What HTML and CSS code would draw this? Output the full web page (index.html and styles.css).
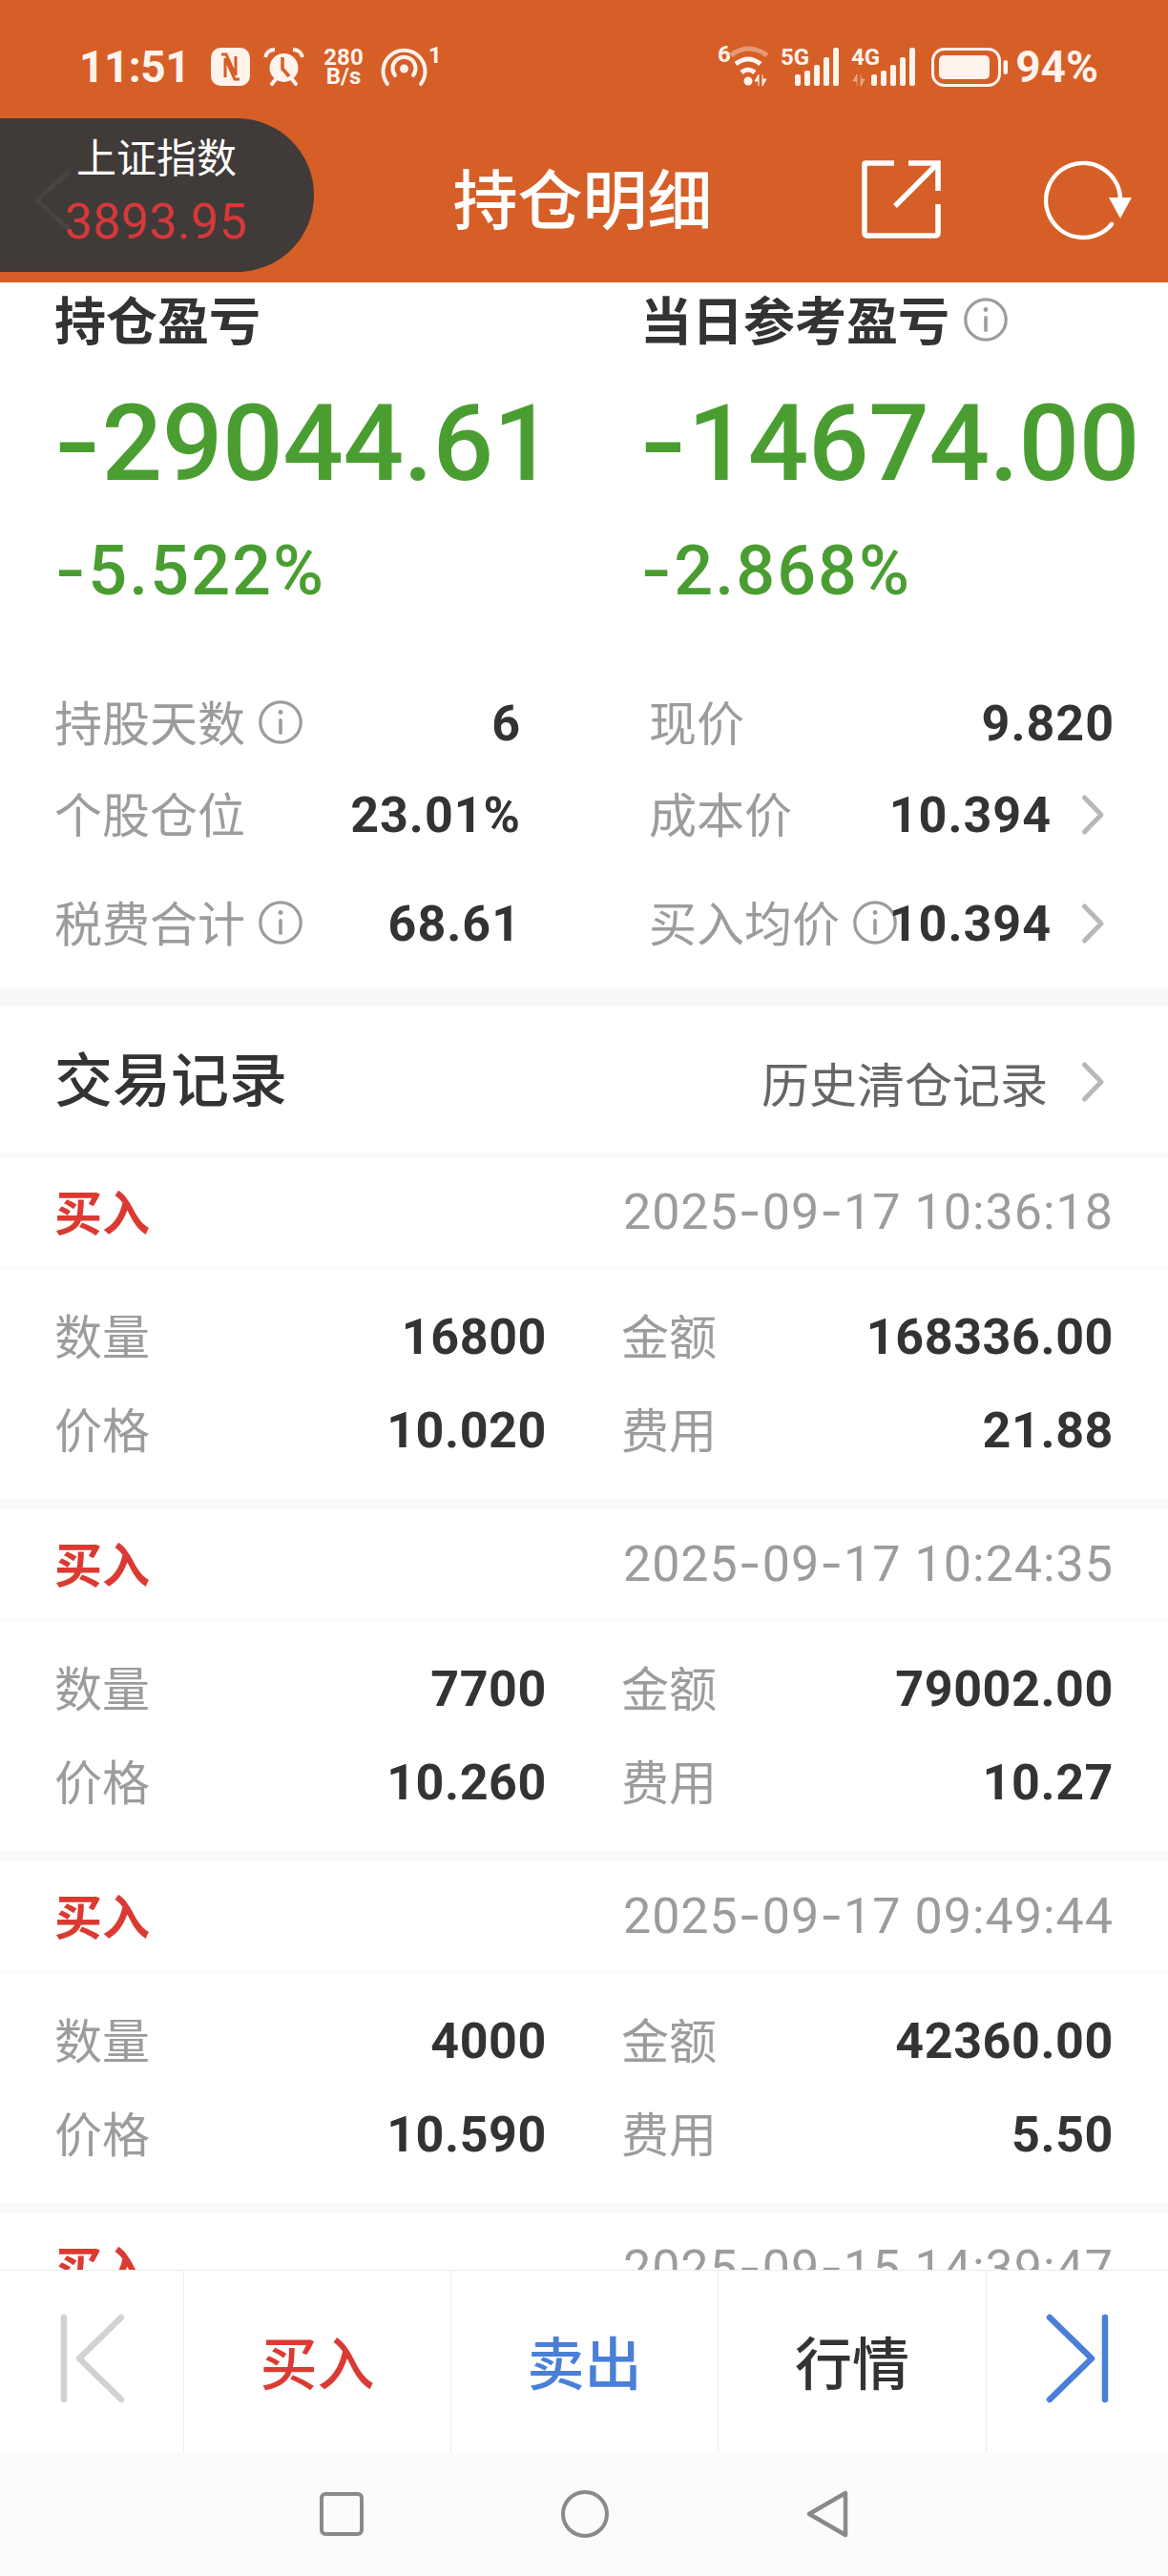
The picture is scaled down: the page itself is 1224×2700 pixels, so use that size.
FILE: index.html
```html
<!DOCTYPE html>
<html lang="zh-CN">
<head>
    <meta charset="UTF-8">
    <meta name="viewport" content="width=device-width, initial-scale=1.0">
    <title>持仓明细</title>
    <link rel="stylesheet" href="styles.css">
</head>
<body>
<div class="phone">
    <header class="app-header">
        <div class="status-bar">
            <div class="status-group">
                <span class="status-time">11:51</span>
                <svg class="ic-nfc" width="41" height="40" viewBox="0 0 41 40">
                    <rect x="1.5" y="1.5" width="38" height="37" rx="9" fill="#fff3ec" stroke="#fff3ec" stroke-width="3"/>
                    <path d="M11 7h5l10 22V9M30 33h-5L15 11v20" fill="none" stroke="#d65e27" stroke-width="3"/>
                </svg>
                <svg class="ic-alarm" width="41" height="40" viewBox="0 0 41 40">
                    <circle cx="20.5" cy="21" r="15" fill="#fff3ec"/>
                    <path d="M1 10Q3 2 11 2M40 10Q38 2 30 2" fill="none" stroke="#fff3ec" stroke-width="4"/>
                    <path d="M8 38l4-5M33 38l-4-5" stroke="#fff3ec" stroke-width="4" stroke-linecap="round"/>
                    <path d="M19 10v12l7 8" fill="none" stroke="#d65e27" stroke-width="3.5"/>
                </svg>
                <span class="net-speed"><b>280</b><b>B/s</b></span>
                <svg class="ic-hotspot" width="60" height="44" viewBox="0 0 60 44">
                    <g fill="none" stroke="#fff3ec" stroke-linecap="round">
                        <path d="M7 40A22 22 0 1 1 42 40" stroke-width="4"/>
                        <path d="M15 31A12 12 0 1 1 34 31" stroke-width="4"/>
                    </g>
                    <circle cx="24.5" cy="24" r="4.5" fill="#fff3ec"/>
                    <text x="50" y="18" class="svg-label">1</text>
                </svg>
            </div>
            <div class="status-group status-right">
                <svg width="54" height="44" viewBox="0 0 54 44">
                    <text x="0" y="17" class="svg-label">6</text>
                    <g fill="none" stroke="#fff3ec" stroke-width="5">
                        <path d="M14 10Q32 -4 52 10" stroke-opacity=".4"/>
                        <path d="M19 19Q32 9 45 19"/>
                        <path d="M25 28Q32 22 39 28"/>
                    </g>
                    <circle cx="32" cy="37" r="4.5" fill="#fff3ec"/>
                    <path d="M43 42V30l-4 7h4M47 30v12l4-7h-4" fill="#fff3ec" stroke="#fff3ec" stroke-width="1"/>
                </svg>
                <svg width="62" height="44" viewBox="0 0 62 44">
                    <text x="0" y="20" class="svg-label">5G</text>
                    <g fill="#fff3ec">
                        <rect x="15" y="30" width="6" height="12" rx="2"/>
                        <rect x="25" y="26" width="6" height="16" rx="2"/>
                        <rect x="35" y="20" width="6" height="22" rx="2"/>
                        <rect x="45" y="12" width="6" height="30" rx="2"/>
                        <rect x="55" y="2" width="6" height="40" rx="2"/>
                    </g>
                </svg>
                <svg width="67" height="44" viewBox="0 0 67 44">
                    <text x="0" y="20" class="svg-label">4G</text>
                    <path d="M6 42V30l-4 7h4M10 30v12l4-7h-4" fill="#fff3ec" fill-opacity=".4" stroke="#fff3ec" stroke-opacity=".4"/>
                    <g fill="#fff3ec">
                        <rect x="21" y="30" width="6" height="12" rx="2"/>
                        <rect x="31" y="26" width="6" height="16" rx="2"/>
                        <rect x="41" y="20" width="6" height="22" rx="2"/>
                        <rect x="51" y="12" width="6" height="30" rx="2"/>
                        <rect x="61" y="2" width="6" height="40" rx="2"/>
                    </g>
                </svg>
                <svg class="ic-battery" width="80" height="41" viewBox="0 0 80 41">
                    <rect x="1.5" y="1.5" width="70" height="38" rx="12" fill="none" stroke="#fff3ec" stroke-width="3"/>
                    <rect x="8" y="8" width="53" height="25" rx="5" fill="#fff3ec"/>
                    <rect x="75.5" y="13" width="4.5" height="15" rx="2" fill="#fff3ec"/>
                </svg>
                <span class="status-battery">94%</span>
            </div>
        </div>
        <div class="title-bar">
            <h1 class="page-title">持仓明细</h1>
            <div class="title-actions">
                <svg width="80" height="82" viewBox="0 0 80 82" fill="none" stroke="#fff" stroke-width="5.5">
                    <path d="M33 3H3a1 1 0 0 0-1 1v73a2 2 0 0 0 2 2h73a2 2 0 0 0 2-2V46"/>
                    <path d="M34 48L78 4M48 3h31v29"/>
                </svg>
                <svg class="ic-refresh" width="92" height="84" viewBox="0 0 92 84">
                    <path d="M78 38A39 39 0 1 0 69 66" fill="none" stroke="#fff" stroke-width="4.5" stroke-linecap="round"/>
                    <path d="M66 38H90L78 60Z" fill="#fff"/>
                </svg>
            </div>
        </div>
        <div class="index-pill">
            <svg class="pill-back" width="40" height="66" viewBox="0 0 40 66">
                <path d="M37 3L4 33l33 30" fill="none" stroke="#474544" stroke-width="5"/>
            </svg>
            <span class="pill-name">上证指数</span>
            <span class="pill-price">3893.95</span>
        </div>
    </header>

    <main class="content">
        <section class="summary">
            <div class="pnl-grid">
                <div>
                    <h2 class="pnl-title">持仓盈亏</h2>
                    <div class="pnl-value"><span class="dash">-</span>29044.61</div>
                    <div class="pnl-rate"><span class="dash">-</span>5.522%</div>
                </div>
                <div>
                    <h2 class="pnl-title">当日参考盈亏
                        <svg class="ic-info" viewBox="0 0 46 46"><use href="#info"/></svg>
                    </h2>
                    <div class="pnl-value"><span class="dash">-</span>14674.00</div>
                    <div class="pnl-rate"><span class="dash">-</span>2.868%</div>
                </div>
            </div>
            <div class="stats-grid">
                <div class="stat">
                    <div class="stat-label">持股天数<svg class="ic-info" viewBox="0 0 46 46"><use href="#info"/></svg></div>
                    <div class="stat-value">6</div>
                </div>
                <div class="stat">
                    <div class="stat-label">现价</div>
                    <div class="stat-value">9.820</div>
                </div>
                <div class="stat">
                    <div class="stat-label">个股仓位</div>
                    <div class="stat-value">23.01%</div>
                </div>
                <div class="stat">
                    <div class="stat-label">成本价</div>
                    <div class="stat-value">10.394</div>
                    <svg class="ic-more" viewBox="0 0 23 42"><use href="#more"/></svg>
                </div>
                <div class="stat stat-last">
                    <div class="stat-label">税费合计<svg class="ic-info" viewBox="0 0 46 46"><use href="#info"/></svg></div>
                    <div class="stat-value">68.61</div>
                </div>
                <div class="stat stat-last">
                    <div class="stat-label">买入均价<svg class="ic-info" viewBox="0 0 46 46"><use href="#info"/></svg></div>
                    <div class="stat-value">10.394</div>
                    <svg class="ic-more" viewBox="0 0 23 42"><use href="#more"/></svg>
                </div>
            </div>
        </section>

        <section class="records-head">
            <h2 class="records-title">交易记录</h2>
            <div class="records-link">历史清仓记录<svg class="ic-more" viewBox="0 0 23 42"><use href="#more"/></svg></div>
        </section>

        <article class="trade">
            <div class="trade-head">
                <span class="trade-type">买入</span>
                <span class="trade-time">2025<span class="dash">-</span>09<span class="dash">-</span>17 10:36:18</span>
            </div>
            <div class="trade-body">
                <div class="trade-cell"><span class="trade-label">数量</span><span class="trade-value">16800</span></div>
                <div class="trade-cell"><span class="trade-label">金额</span><span class="trade-value">168336.00</span></div>
                <div class="trade-cell"><span class="trade-label">价格</span><span class="trade-value">10.020</span></div>
                <div class="trade-cell"><span class="trade-label">费用</span><span class="trade-value">21.88</span></div>
            </div>
        </article>

        <article class="trade">
            <div class="trade-head">
                <span class="trade-type">买入</span>
                <span class="trade-time">2025<span class="dash">-</span>09<span class="dash">-</span>17 10:24:35</span>
            </div>
            <div class="trade-body">
                <div class="trade-cell"><span class="trade-label">数量</span><span class="trade-value">7700</span></div>
                <div class="trade-cell"><span class="trade-label">金额</span><span class="trade-value">79002.00</span></div>
                <div class="trade-cell"><span class="trade-label">价格</span><span class="trade-value">10.260</span></div>
                <div class="trade-cell"><span class="trade-label">费用</span><span class="trade-value">10.27</span></div>
            </div>
        </article>

        <article class="trade">
            <div class="trade-head">
                <span class="trade-type">买入</span>
                <span class="trade-time">2025<span class="dash">-</span>09<span class="dash">-</span>17 09:49:44</span>
            </div>
            <div class="trade-body">
                <div class="trade-cell"><span class="trade-label">数量</span><span class="trade-value">4000</span></div>
                <div class="trade-cell"><span class="trade-label">金额</span><span class="trade-value">42360.00</span></div>
                <div class="trade-cell"><span class="trade-label">价格</span><span class="trade-value">10.590</span></div>
                <div class="trade-cell"><span class="trade-label">费用</span><span class="trade-value">5.50</span></div>
            </div>
        </article>

        <article class="trade">
            <div class="trade-head">
                <span class="trade-type">买入</span>
                <span class="trade-time">2025<span class="dash">-</span>09<span class="dash">-</span>15 14:39:47</span>
            </div>
        </article>
    </main>

    <nav class="toolbar">
        <div class="tool-cell tool-first">
            <svg width="70" height="94" viewBox="0 0 70 94" fill="none" stroke="#d2d2d2" stroke-width="6.5" stroke-linecap="round" stroke-linejoin="round">
                <path d="M4 4v86M64 4L20 47l44 43"/>
            </svg>
        </div>
        <div class="tool-cell tool-buy"><span>买入</span></div>
        <div class="tool-cell tool-sell"><span>卖出</span></div>
        <div class="tool-cell tool-quote"><span>行情</span></div>
        <div class="tool-cell">
            <svg width="70" height="94" viewBox="0 0 70 94" fill="none" stroke="#4a7fd8" stroke-width="6.5" stroke-linecap="round" stroke-linejoin="round">
                <path d="M64 4v86M6 4l44 43L6 90"/>
            </svg>
        </div>
    </nav>

    <div class="nav-bar">
        <svg width="46" height="46" viewBox="0 0 46 46">
            <rect x="2" y="2" width="42" height="42" rx="4" fill="none" stroke="#8a8a8a" stroke-width="4"/>
        </svg>
        <svg width="50" height="50" viewBox="0 0 50 50">
            <circle cx="25" cy="25" r="23" fill="none" stroke="#8a8a8a" stroke-width="4"/>
        </svg>
        <svg width="44" height="50" viewBox="0 0 44 50">
            <path d="M41 3L3 25l38 22Z" fill="none" stroke="#8a8a8a" stroke-width="4.5" stroke-linejoin="round"/>
        </svg>
    </div>
</div>

<svg class="icon-defs">
    <defs>
        <g id="info">
            <circle cx="23" cy="23" r="21.2" fill="none" stroke="#9c9c9c" stroke-width="3.2"/>
            <circle cx="23" cy="12.5" r="2.4" fill="#9c9c9c"/>
            <rect x="21.2" y="19" width="3.6" height="17" rx="1.8" fill="#9c9c9c"/>
        </g>
        <path id="more" d="M2.5 3L20 21 2.5 39" fill="none" stroke="#b8b8b8" stroke-width="5" stroke-linecap="round" stroke-linejoin="round"/>
    </defs>
</svg>
</body>
</html>
```

FILE: styles.css
```css
* {
    box-sizing: border-box;
}
body {
    margin: 0;
    padding: 0;
    background-color: #fff;
    font-family: Roboto, "Noto Sans CJK SC", sans-serif;
    color: #333;
}
h1, h2 {
    margin: 0;
    font-size: inherit;
}
svg {
    display: block;
    flex-shrink: 0;
    overflow: visible;
}
.icon-defs {
    width: 0;
    height: 0;
    position: absolute;
}
.phone {
    width: 1224px;
    height: 2700px;
    display: flex;
    flex-direction: column;
    overflow: hidden;
}
.dash {
    font-family: Inter, sans-serif;
    line-height: 0;
}

/* header */
.app-header {
    position: relative;
    height: 296px;
    flex-shrink: 0;
    background-color: #d65e27;
}
.status-bar {
    height: 120px;
    padding: 48px 73px 0 83px;
    display: flex;
    justify-content: space-between;
    align-items: flex-start;
    color: #fff3ec;
}
.status-group {
    display: flex;
    align-items: center;
    height: 44px;
}
.status-time {
    font-size: 46px;
    font-weight: 700;
    letter-spacing: -0.5px;
    line-height: 44px;
    width: 138px;
}
.ic-alarm {
    margin-left: 15px;
}
.net-speed {
    margin-left: 19px;
    width: 46px;
    display: flex;
    flex-direction: column;
    align-items: center;
    font-size: 24px;
    line-height: 20px;
}
.ic-hotspot {
    margin-left: 16px;
}
.status-right {
    gap: 12px;
}
.svg-label {
    font-family: Roboto, sans-serif;
    font-size: 24px;
    font-weight: 700;
    fill: #fff3ec;
}
.ic-battery {
    margin-left: 5px;
}
.status-battery {
    font-size: 46px;
    font-weight: 700;
    line-height: 44px;
    margin-left: -4px;
}
.title-bar {
    height: 176px;
    display: flex;
    align-items: center;
    justify-content: center;
    position: relative;
}
.page-title {
    font-size: 68px;
    font-weight: 500;
    color: #fff;
    line-height: 1;
    margin-left: -3px;
    margin-top: 8px;
}
.title-actions {
    position: absolute;
    left: 904px;
    top: 48px;
    display: flex;
    gap: 112px;
}
.ic-refresh {
    margin-top: 1px;
}
.index-pill {
    position: absolute;
    left: 0;
    top: 124px;
    width: 329px;
    height: 161px;
    border-radius: 0 81px 81px 0;
    background-color: #403a38;
    padding-left: 68px;
    display: flex;
    flex-direction: column;
}
.pill-back {
    position: absolute;
    left: 35px;
    top: 53px;
}
.pill-name {
    position: relative;
    font-size: 42px;
    line-height: 42px;
    color: #fff;
    margin: 22px 0 0 12px;
}
.pill-price {
    position: relative;
    font-size: 52px;
    line-height: 52px;
    letter-spacing: 0.3px;
    color: #d5393a;
    margin-top: 19px;
}

/* main scroll area */
.content {
    flex: 1;
    min-height: 0;
    overflow: hidden;
    background-color: #f7f8fa;
}
.summary {
    background-color: #fff;
    padding: 16px 0 20px 57px;
    margin-bottom: 19px;
}
.pnl-grid {
    display: grid;
    grid-template-columns: 614px 1fr;
}
.pnl-title {
    display: flex;
    align-items: center;
    font-size: 54px;
    font-weight: 700;
    line-height: 54px;
    white-space: nowrap;
}
.pnl-title .ic-info {
    margin: -8px 0 0 15px;
}
.pnl-value {
    margin: 43px 0 0 -2px;
    font-size: 112px;
    font-weight: 500;
    letter-spacing: -0.4px;
    line-height: 112px;
    color: #4a9e31;
    white-space: nowrap;
}
.pnl-rate {
    margin-top: 42px;
    font-size: 72px;
    font-weight: 500;
    letter-spacing: 2px;
    line-height: 72px;
    color: #4a9e31;
    white-space: nowrap;
}
.ic-info {
    width: 46px;
    height: 46px;
}
.stats-grid {
    margin-top: 75px;
    display: grid;
    grid-template-columns: 489px 488px;
    column-gap: 134px;
}
.stat {
    height: 96px;
    display: flex;
    align-items: center;
}
.stat-last {
    margin-top: 18px;
}
.stat-label {
    flex: 1;
    min-width: 0;
    margin-top: -6px;
    display: flex;
    align-items: center;
    gap: 14px;
    font-size: 50px;
    color: #9c9c9c;
    white-space: nowrap;
}
.stat-label .ic-info {
    margin-top: 4px;
}
.stat-value {
    font-size: 52px;
    font-weight: 700;
    letter-spacing: 1px;
    position: relative;
}
.stat .ic-more {
    margin: 0 11px 0 32px;
}
.ic-more {
    width: 23px;
    height: 42px;
}

/* trade records */
.records-head {
    height: 153px;
    margin-bottom: 5px;
    padding: 0 67px 0 57px;
    background-color: #fff;
    display: flex;
    align-items: center;
    justify-content: space-between;
}
.records-title {
    font-size: 61px;
    font-weight: 500;
    margin-top: -6px;
}
.records-link {
    display: flex;
    align-items: center;
    gap: 36px;
    margin-top: 4px;
    font-size: 50px;
    color: #666;
}
.trade {
    height: 358px;
    margin-bottom: 11px;
    background-color: #fff;
}
.trade-head {
    height: 116px;
    padding: 0 57px;
    border-bottom: 1px solid #f8f8f8;
    display: flex;
    align-items: center;
    justify-content: space-between;
}
.trade-type {
    margin-top: -6px;
    font-size: 50px;
    font-weight: 700;
    color: #db3a32;
}
.trade-time {
    font-size: 52px;
    letter-spacing: 1px;
    color: #9c9c9c;
}
.trade-body {
    padding: 23px 57px 0;
    display: grid;
    grid-template-columns: 516px 516px;
    column-gap: 78px;
}
.trade-cell {
    height: 98px;
    display: flex;
    align-items: center;
    justify-content: space-between;
}
.trade-label {
    margin-top: -6px;
    font-size: 50px;
    color: #9c9c9c;
}
.trade-value {
    font-size: 52px;
    font-weight: 700;
    letter-spacing: 0.6px;
}

/* bottom bars */
.toolbar {
    height: 191px;
    flex-shrink: 0;
    background-color: #fff;
    border-top: 1px solid #ececec;
    display: grid;
    grid-template-columns: 192px 280px 280px 281px 191px;
}
.tool-cell {
    display: flex;
    align-items: center;
    justify-content: center;
    font-size: 60px;
    font-weight: 500;
    border-left: 1px solid #ececec;
}
.tool-cell:first-child {
    border-left: none;
}
.tool-cell svg {
    margin-top: -6px;
}
.tool-cell span {
    margin-top: -4px;
}
.tool-first svg {
    margin-left: 4px;
}
.tool-buy {
    color: #db3a32;
}
.tool-sell {
    color: #4a7fd8;
}
.tool-quote {
    color: #333;
}
.nav-bar {
    height: 130px;
    flex-shrink: 0;
    background-color: #fbfbfb;
    display: flex;
    align-items: center;
    justify-content: center;
    gap: 207px;
}
```
